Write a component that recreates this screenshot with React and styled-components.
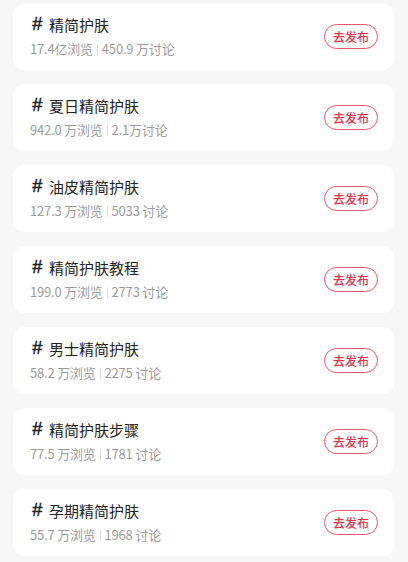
import React from "react";
import styled, { createGlobalStyle } from "styled-components";

const Global = createGlobalStyle`
  html, body { margin: 0; padding: 0; background: #f7f7f7; }
  body { font-family: "Noto Sans CJK SC", "Noto Sans", sans-serif; }
`;

const List = styled.div`
  display: flex;
  flex-direction: column;
  gap: 14px;
  padding: 3px 14px 6px 13px;
`;

const Card = styled.div`
  height: 67px;
  box-sizing: border-box;
  background: #fff;
  border-radius: 12px;
  display: flex;
  align-items: center;
  justify-content: space-between;
  padding: 0 16px 0 17px;
`;

const Info = styled.div`
  display: flex;
  flex-direction: column;
  gap: 5px;
  margin-top: -1px;
`;

const Title = styled.div`
  display: flex;
  align-items: center;
  font-size: 15px;
  line-height: 21px;
  color: #222;
`;

const Hash = styled.span`
  font-family: "Liberation Sans", Arial, sans-serif;
  font-style: italic;
  font-size: 18px;
  line-height: 21px;
  margin-left: 2px;
  margin-right: 7px;
  color: #222;
  -webkit-text-stroke: 0.5px #222;
`;

const Stats = styled.div`
  display: flex;
  align-items: center;
  font-size: 13px;
  line-height: 18px;
  color: #9a9a9a;
  letter-spacing: -0.2px;
`;

const Sep = styled.span`
  width: 1px;
  height: 11px;
  background: #dcdcdc;
  margin: 0 4px;
`;

const Button = styled.button`
  width: 54px;
  height: 25px;
  box-sizing: border-box;
  border: 1px solid #e8566c;
  border-radius: 13px;
  background: #fff;
  color: #e3304b;
  font-family: inherit;
  font-size: 12px;
  font-weight: 500;
  padding: 0;
  display: flex;
  align-items: center;
  justify-content: center;
`;

const topics = [
  ["精简护肤", "17.4亿浏览", "450.9 万讨论"],
  ["夏日精简护肤", "942.0 万浏览", "2.1万讨论"],
  ["油皮精简护肤", "127.3 万浏览", "5033 讨论"],
  ["精简护肤教程", "199.0 万浏览", "2773 讨论"],
  ["男士精简护肤", "58.2 万浏览", "2275 讨论"],
  ["精简护肤步骤", "77.5 万浏览", "1781 讨论"],
  ["孕期精简护肤", "55.7 万浏览", "1968 讨论"],
];

export default function App() {
  return (
    <>
      <Global />
      <List>
        {topics.map(([t, v, d]) => (
          <Card key={t}>
            <Info>
              <Title>
                <Hash>#</Hash>
                {t}
              </Title>
              <Stats>
                {v}
                <Sep />
                {d}
              </Stats>
            </Info>
            <Button>去发布</Button>
          </Card>
        ))}
      </List>
    </>
  );
}
